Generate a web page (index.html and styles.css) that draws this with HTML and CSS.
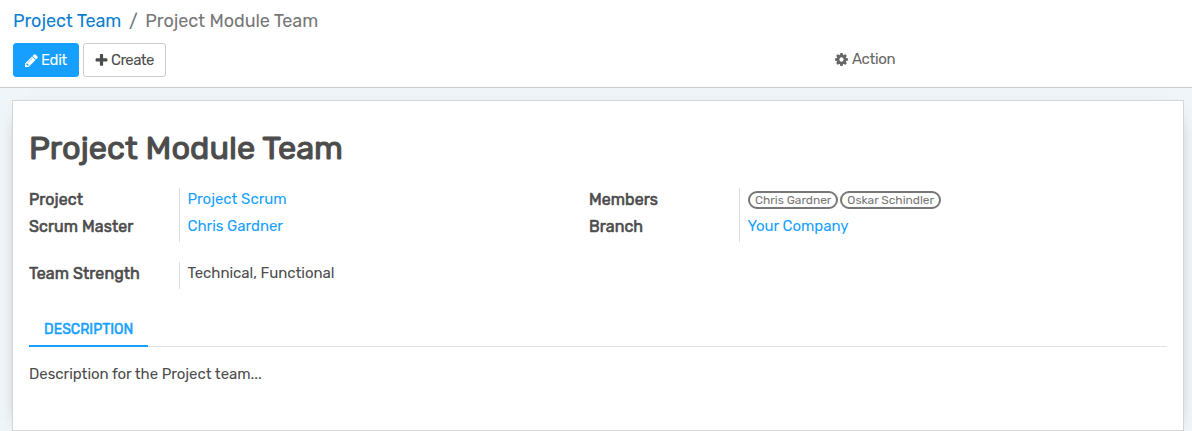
FILE: index.html
```html
<!DOCTYPE html>
<html lang="en">
<head>
<meta charset="utf-8">
<title>Project Module Team</title>
<link rel="stylesheet" href="styles.css">
</head>
<body>
<header class="control-panel">
  <nav class="breadcrumb"><a class="crumb-link">Project Team</a><span class="sep">/</span><span class="crumb-current">Project Module Team</span></nav>
  <div class="toolbar">
    <button class="btn btn-primary"><svg class="icon" viewBox="128 0 1536 1792"><path d="M491 1536l91-91-235-235-91 91v107h128v128h107zm523-928q0-22-22-22-10 0-17 7l-542 542q-7 7-7 17 0 22 22 22 10 0 17-7l542-542q7-7 7-17zm-54-192l416 416-832 832h-416v-416zm683 96q0 53-37 90l-166 166-416-416 166-165q36-38 90-38 53 0 91 38l235 234q37 39 37 91z"/></svg><span class="edit-text">Edit</span></button>
    <button class="btn btn-secondary"><svg class="icon" viewBox="128 0 1536 1792"><path d="M1600 736v192q0 40-28 68t-68 28h-416v416q0 40-28 68t-68 28h-192q-40 0-68-28t-28-68v-416h-416q-40 0-68-28t-28-68v-192q0-40 28-68t68-28h416v-416q0-40 28-68t68-28h192q40 0 68 28t28 68v416h416q40 0 68 28t28 68z"/></svg><span class="create-text">Create</span></button>
    <button class="action"><svg class="icon" viewBox="128 0 1536 1792"><path d="M1152 896q0-106-75-181t-181-75-181 75-75 181 75 181 181 75 181-75 75-181zm512-109v222q0 12-8 23t-20 13l-185 28q-19 54-39 91 35 50 107 138 10 12 10 25t-9 23q-27 37-99 108t-94 71q-12 0-26-9l-138-108q-44 23-91 38-16 136-29 186-7 28-36 28h-222q-14 0-24.5-8.5t-11.5-21.5l-28-184q-49-16-90-37l-141 107q-10 9-25 9-14 0-25-11-126-114-165-168-7-10-7-23 0-12 8-23 15-21 51-66.5t54-70.5q-27-50-41-99l-183-27q-13-2-21-12.5t-8-23.5v-222q0-12 8-23t19-13l186-28q14-46 39-92-40-57-107-138-10-12-10-24 0-10 9-23 26-36 98.5-107.5t94.5-71.5q13 0 26 10l138 107q44-23 91-38 16-136 29-186 7-28 36-28h222q14 0 24.5 8.5t11.5 21.5l28 184q49 16 90 37l142-107q9-9 24-9 13 0 25 10 129 119 165 170 7 8 7 22 0 12-8 23-15 21-51 66.5t-54 70.5q26 50 41 98l183 28q13 2 21 12.5t8 23.5z"/></svg><span class="action-text">Action</span></button>
  </div>
</header>
<main class="sheet">
  <h1 class="title"><span>Project Module Team</span></h1>
  <div class="groups">
    <dl class="group">
      <dt>Project</dt><dd><a class="link">Project Scrum</a></dd>
      <dt>Scrum Master</dt><dd><a class="link">Chris Gardner</a></dd>
    </dl>
    <dl class="group">
      <dt>Members</dt><dd class="tags"><span class="tag">Chris Gardner</span><span class="tag">Oskar Schindler</span></dd>
      <dt>Branch</dt><dd><a class="link">Your Company</a></dd>
    </dl>
    <dl class="group">
      <dt>Team Strength</dt><dd><span class="strength">Technical, Functional</span></dd>
    </dl>
  </div>
  <div class="tabs"><a class="tab"><span>DESCRIPTION</span></a></div>
  <p class="description"><span>Description for the Project team...</span></p>
</main>
</body>
</html>
```

FILE: styles.css
```css
* { box-sizing: border-box; }
body {
  margin: 0;
  height: 431px;
  overflow: hidden;
  background: #f0f5fa;
  color: #4c4c4c;
  font: 400 15px/27px Rubik, Roboto, sans-serif;
}
.control-panel {
  height: 88px;
  padding: 7px 13px 0;
  background: #fff;
  border-bottom: 1px solid #ccc;
}
.breadcrumb {
  display: flex;
  height: 36px;
  font-size: 18px;
  line-height: 28px;
  letter-spacing: -0.05px;
  white-space: nowrap;
}
.crumb-link { color: #0c80d0; }
.sep { width: 24px; text-align: center; color: #6c757d; }
.crumb-current { color: #777; }
.toolbar { display: flex; gap: 4px; }
.btn, .action {
  display: flex;
  align-items: center;
  gap: 3px;
  height: 34px;
  padding: 0 11px;
  border: 1px solid transparent;
  border-radius: 3px;
  font: 400 15px/20px Rubik, Roboto, sans-serif;
  letter-spacing: -0.4px;
  white-space: nowrap;
}
.btn-primary { width: 66px; color: #fff; background: #169fff; border-color: #169fff; }
.btn-secondary { width: 83px; color: #4c4c4c; background: #fff; border-color: #ccc; }
.action { margin-left: 665px; height: 32px; padding: 0; border: 0; gap: 4px; letter-spacing: -0.35px; color: #666; background: none; }
.icon { flex: none; width: 13px; height: 15px; fill: currentColor; }
.create-text { letter-spacing: -0.6px; }
.sheet {
  height: 331px;
  margin: 12px 8px 0 12px;
  padding: 24px 16px 0;
  background: #fff;
  border: 1px solid #d5d5d8;
  box-shadow: 0 5px 20px -15px #000;
}
.title {
  margin: 0 0 15px;
  font-size: 32.5px;
  font-weight: 400;
  line-height: 47px;
  height: 48px;
  -webkit-text-stroke: 1.1px currentColor;
}
.groups {
  display: grid;
  grid-template-columns: 560px 560px;
  row-gap: 20px;
}
.group {
  display: grid;
  grid-template-columns: 150px 1fr;
  margin: 0;
}
dt { height: 27px; line-height: 23px; font-size: 16px; font-weight: 400; letter-spacing: 0.07px; -webkit-text-stroke: 0.6px currentColor; }
dd { height: 27px; margin: 0; padding-left: 7.5px; border-left: 1px solid #ddd; line-height: 22px; letter-spacing: -0.03px; }
.link { color: #169fff; }
.tags { display: flex; gap: 2px; padding: 3px 0 0 8px; }
.tag {
  height: 18px;
  padding: 0 5px;
  border: 2px solid #777;
  border-radius: 9px;
  color: #777;
  font-size: 12px;
  line-height: 14px;
  white-space: nowrap;
}
.tabs { display: flex; height: 38px; margin-top: 20px; border-bottom: 1px solid #dee2e6; }
.tab {
  height: 38px;
  width: 119px;
  padding-left: 15px;
  border-bottom: 2px solid #169fff;
  color: #169fff;
  font-size: 14px;
  font-weight: 400;
  line-height: 41px;
  -webkit-text-stroke: 0.5px currentColor;
}
.description { margin: 16px 0 0; line-height: 22px; letter-spacing: -0.04px; }
```
